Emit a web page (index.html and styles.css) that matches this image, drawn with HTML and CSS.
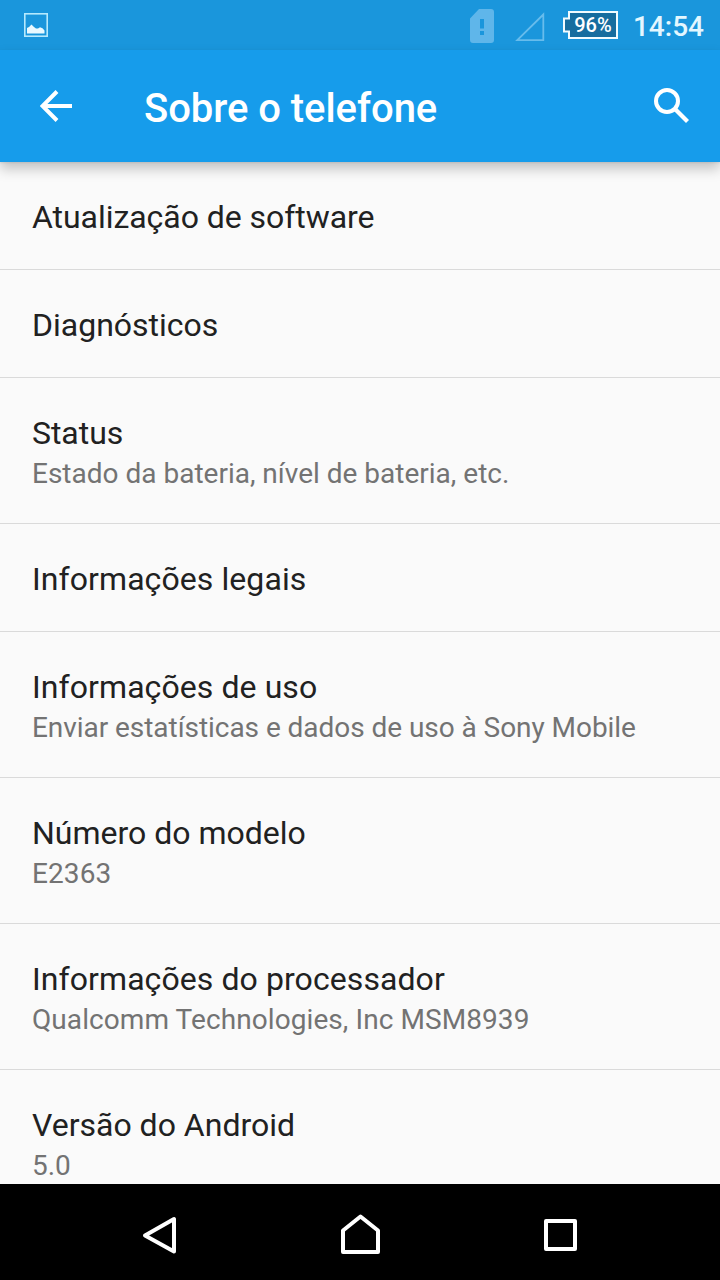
FILE: index.html
```html
<!DOCTYPE html>
<html lang="pt">
<head>
<meta charset="utf-8">
<title>Sobre o telefone</title>
<link rel="stylesheet" href="styles.css">
</head>
<body>
<div class="screen">
  <div class="status-bar">
    <svg class="picture-icon" width="24" height="24" viewBox="0 0 24 24"><rect x=".75" y=".75" width="22.500" height="22.500" fill="none" stroke="#b5e9fd" stroke-width="1.700"/><path d="M3 20.500v-5.500l2-1 2.500-2.500 2.500 2.500 2 1.500h2l2-1.200 2.500 1 2 2.200v3z" fill="#e9f9ff"/></svg>
    <svg class="sim-icon" width="24" height="34" viewBox="0 0 24 34"><path fill="#5fb6ea" fill-rule="evenodd" d="M9 0h12q3 0 3 3v28q0 3-3 3H3q-3 0-3-3V9.500zM10 10v9.500h4V10zM10 22v4h4v-4z"/></svg>
    <svg class="signal-icon" width="30" height="30" viewBox="0 0 30 30"><path d="M2.300 28.200H28.300V2.500z" fill="none" stroke="#67bcec" stroke-width="1.800"/></svg>
    <div class="battery">
      <svg class="battery-shape" width="55" height="28" viewBox="0 0 55 28"><path d="M6 1H54V27H6V20.500H1V7.500H6z" fill="#166d9f" stroke="#f0fbff" stroke-width="2"/></svg>
      <span class="battery-level">96%</span>
    </div>
    <span class="clock">14:54</span>
  </div>
  <header class="app-bar">
    <svg class="back" width="32" height="32" viewBox="0 0 32 32"><path d="M17 1.500L2.500 16 17 30.500M2.500 16H32" fill="none" stroke="#fff" stroke-width="4"/></svg>
    <h1 class="heading">Sobre o telefone</h1>
    <svg class="search" width="36" height="36" viewBox="0 0 36 36"><circle cx="13" cy="13" r="11" fill="none" stroke="#fff" stroke-width="4"/><path d="M21.500 21.500L33.500 33.500" stroke="#fff" stroke-width="4.200"/></svg>
  </header>
  <main class="list">
    <div class="row"><div class="title tight">Atualização de software</div></div>
    <div class="row"><div class="title">Diagnósticos</div></div>
    <div class="row"><div class="title tight">Status</div><div class="summary">Estado da bateria, nível de bateria, etc.</div></div>
    <div class="row"><div class="title loose">Informações legais</div></div>
    <div class="row"><div class="title loose">Informações de uso</div><div class="summary tight">Enviar estatísticas e dados de uso à Sony Mobile</div></div>
    <div class="row"><div class="title">Número do modelo</div><div class="summary loose">E2363</div></div>
    <div class="row"><div class="title loose">Informações do processador</div><div class="summary loose">Qualcomm Technologies, Inc MSM8939</div></div>
    <div class="row"><div class="title">Versão do Android</div><div class="summary">5.0</div></div>
  </main>
  <nav class="nav-bar">
    <svg width="200" height="96" viewBox="0 0 200 96"><path d="M85 51.500L114 35V67.500z"/></svg>
    <svg width="200" height="96" viewBox="0 0 200 96"><path d="M83 68V46.500L100.500 32.500 118 46.500V68z"/></svg>
    <svg width="200" height="96" viewBox="0 0 200 96"><path d="M86 37H115V65H86z"/></svg>
  </nav>
</div>
</body>
</html>
```
FILE: styles.css
```css
body {
  margin: 0;
  font-family: Roboto, "Liberation Sans", sans-serif;
}

.screen {
  display: flex;
  flex-direction: column;
  width: 720px;
  height: 1280px;
  overflow: hidden;
  background: #fafafa;
}

.status-bar {
  box-sizing: border-box;
  display: flex;
  flex: none;
  align-items: flex-start;
  height: 50px;
  padding: 0 16px 0 24px;
  background: #1a96dc;
}

.picture-icon { margin-top: 13px; }
.sim-icon { margin: 9px 21px 0 auto; }
.signal-icon { margin: 12px 18px 0 0; }

.battery {
  display: grid;
  margin: 11px 15px 0 0;
}

.battery-shape,
.battery-level { grid-area: 1 / 1; }

.battery-level {
  padding-left: 5px;
  text-align: center;
  font-size: 20px;
  font-weight: 500;
  line-height: 28px;
  color: #fff;
}

.clock {
  font-size: 28px;
  font-weight: 500;
  line-height: 54px;
  color: #e3f7ff;
}

.app-bar {
  position: relative;
  box-sizing: border-box;
  display: flex;
  flex: none;
  align-items: center;
  height: 112px;
  padding: 0 30px 0 40px;
  background: #169ceb;
  box-shadow: 0 7px 12px rgba(0, 0, 0, 0.22), 0 1px 2px rgba(0, 0, 0, 0.08);
}

.heading {
  margin: 5px 0 0 72px;
  font-size: 40px;
  font-weight: 500;
  line-height: 48px;
  letter-spacing: -0.05px;
  color: #fff;
}

.search { margin-left: auto; }

.list {
  flex: 1;
  min-height: 0;
  overflow: hidden;
}

.row {
  box-sizing: border-box;
  height: 108px;
  padding: 36px 32px 0;
  border-bottom: 1px solid #dadada;
}

.row:has(.summary) { height: 146px; }

.title {
  font-size: 32px;
  line-height: 38px;
  color: #212121;
}

.summary {
  margin-top: 5px;
  font-size: 28px;
  line-height: 33px;
  color: #737373;
}

.tight { letter-spacing: -0.05px; }
.loose { letter-spacing: 0.08px; }

.nav-bar {
  display: flex;
  flex: none;
  justify-content: center;
  height: 96px;
  background: #000;
}

.nav-bar path {
  fill: none;
  stroke: #fff;
  stroke-width: 4;
  stroke-linejoin: round;
}
```
